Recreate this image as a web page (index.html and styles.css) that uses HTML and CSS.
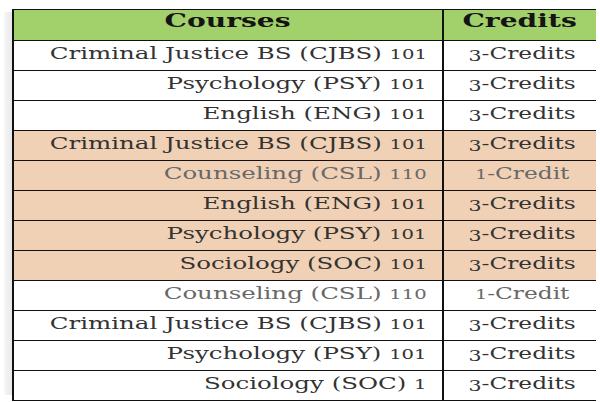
FILE: index.html
```html
<!DOCTYPE html>
<html>
<head>
<meta charset="utf-8">
<link rel="stylesheet" href="styles.css">
</head>
<body>
<div class="page">
  <div class="shade"></div>
  <table class="courses">
    <thead>
      <tr><th class="c1"><span class="t">Courses</span></th><th class="c2"><span class="t">Credits</span></th></tr>
    </thead>
    <tbody>
      <tr><td class="c1"><span class="t">Criminal Justice BS (CJBS) <span class="os">101</span></span></td><td class="c2"><span class="t"><span class="os3">3</span>-Credits</span></td></tr>
      <tr><td class="c1"><span class="t">Psychology (PSY) <span class="os">101</span></span></td><td class="c2"><span class="t"><span class="os3">3</span>-Credits</span></td></tr>
      <tr><td class="c1"><span class="t">English (ENG) <span class="os">101</span></span></td><td class="c2"><span class="t"><span class="os3">3</span>-Credits</span></td></tr>
      <tr class="hl"><td class="c1"><span class="t">Criminal Justice BS (CJBS) <span class="os">101</span></span></td><td class="c2"><span class="t"><span class="os3">3</span>-Credits</span></td></tr>
      <tr class="hl light"><td class="c1"><span class="t">Counseling (CSL) <span class="os">110</span></span></td><td class="c2"><span class="t"><span class="os">1</span>-Credit</span></td></tr>
      <tr class="hl"><td class="c1"><span class="t">English (ENG) <span class="os">101</span></span></td><td class="c2"><span class="t"><span class="os3">3</span>-Credits</span></td></tr>
      <tr class="hl"><td class="c1"><span class="t">Psychology (PSY) <span class="os">101</span></span></td><td class="c2"><span class="t"><span class="os3">3</span>-Credits</span></td></tr>
      <tr class="hl"><td class="c1"><span class="t">Sociology (SOC) <span class="os">101</span></span></td><td class="c2"><span class="t"><span class="os3">3</span>-Credits</span></td></tr>
      <tr class="light"><td class="c1"><span class="t">Counseling (CSL) <span class="os">110</span></span></td><td class="c2"><span class="t"><span class="os">1</span>-Credit</span></td></tr>
      <tr><td class="c1"><span class="t">Criminal Justice BS (CJBS) <span class="os">101</span></span></td><td class="c2"><span class="t"><span class="os3">3</span>-Credits</span></td></tr>
      <tr><td class="c1"><span class="t">Psychology (PSY) <span class="os">101</span></span></td><td class="c2"><span class="t"><span class="os3">3</span>-Credits</span></td></tr>
      <tr><td class="c1"><span class="t">Sociology (SOC) <span class="os">1</span></span></td><td class="c2"><span class="t"><span class="os3">3</span>-Credits</span></td></tr>
    </tbody>
  </table>
</div>
</body>
</html>
```

FILE: styles.css
```css
html, body {
  margin: 0;
  padding: 0;
  background: #fff;
  overflow: hidden;
}
.page {
  display: flex;
  align-items: flex-start;
  width: 600px;
  height: 402px;
}
.shade {
  width: 8px;
  height: 383px;
  margin: 12px 0 0 4px;
  background: linear-gradient(to right, rgba(0,0,0,0.03), rgba(0,0,0,0.09));
}
.courses {
  margin-top: 9px;
  width: 584px;
  border-collapse: collapse;
  table-layout: fixed;
  font-family: "DejaVu Serif", "Liberation Serif", serif;
  color: #333;
}
.courses th, .courses td {
  padding: 0;
  border-top: 1px solid #111;
  border-bottom: 1px solid #111;
  white-space: nowrap;
}
.courses th {
  height: 30px;
  background: #a2d06a;
  color: #141414;
  font-size: 19px;
  font-weight: bold;
  text-align: center;
}
.courses td {
  height: 29px;
  font-size: 17px;
}
.t {
  display: inline-block;
  line-height: 20px;
  transform: translateY(-2px) scaleX(1.44);
  transform-origin: center center;
}
th .t {
  transform: translateY(-5px) scaleX(1.48);
}
.c1 {
  width: 428px;
  border-left: 2px solid #111;
}
.courses td.c1 {
  text-align: right;
  padding-right: 15px;
}
td.c1 .t {
  transform-origin: right center;
}
.c2 {
  border-left: 2px solid #111;
  text-align: center;
}
td.c2 .t {
  transform: translate(2px, -2px) scaleX(1.37);
}
.os {
  font-size: 0.8em;
}
.os3 {
  font-size: 0.88em;
  position: relative;
  top: 0.16em;
}
.hl td {
  background: #f0d1b5;
}
.light td {
  color: #686868;
}
```
